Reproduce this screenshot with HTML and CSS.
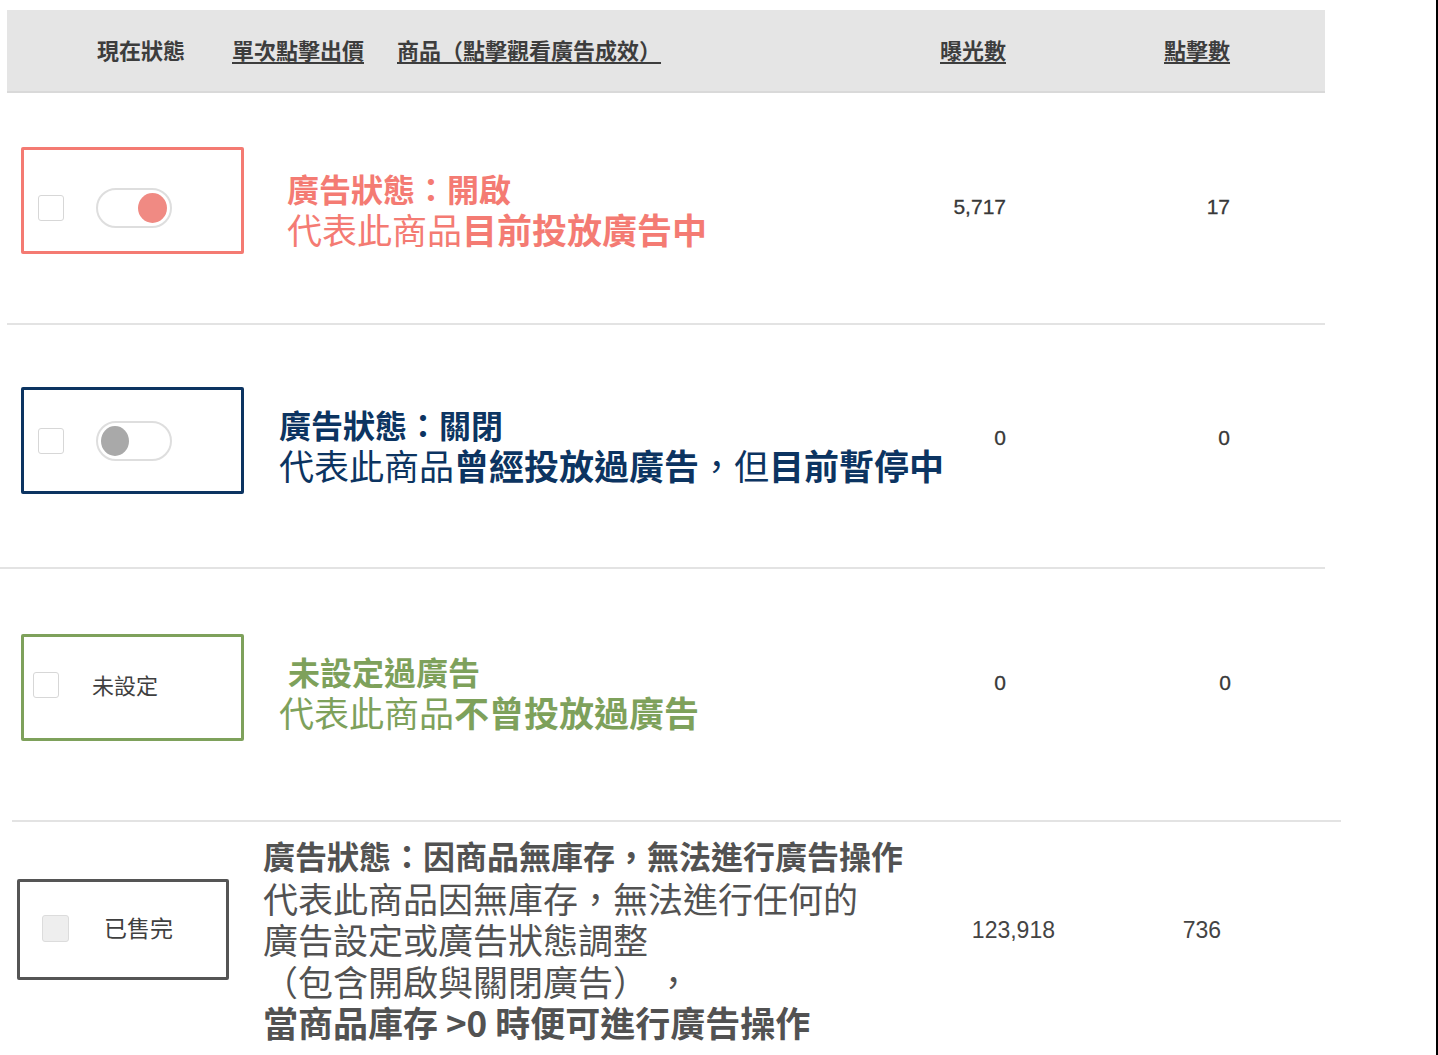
FILE: index.html
```html
<!DOCTYPE html>
<html lang="zh-Hant">
<head>
<meta charset="utf-8">
<title>廣告狀態說明</title>
<link rel="stylesheet" href="styles.css">
</head>
<body>
<div class="page">
  <div class="thead">
    <span class="th th-status">現在狀態</span>
    <span class="th th-bid u">單次點擊出價</span>
    <span class="th th-product u">商品（點擊觀看廣告成效）</span>
    <span class="th th-imp u">曝光數</span>
    <span class="th th-click u">點擊數</span>
  </div>

  <div class="row row1">
    <div class="box box-red">
      <span class="cb"></span>
      <span class="toggle on"><span class="knob"></span></span>
    </div>
    <div class="desc red">
      <div class="l-title">廣告狀態：開啟</div>
      <div class="l-body">代表此商品<b>目前投放廣告中</b></div>
    </div>
    <div class="num">5,717</div>
    <div class="num">17</div>
  </div>

  <div class="row row2">
    <div class="box box-navy">
      <span class="cb"></span>
      <span class="toggle off"><span class="knob"></span></span>
    </div>
    <div class="desc navy">
      <div class="l-title">廣告狀態：關閉</div>
      <div class="l-body">代表此商品<b>曾經投放過廣告</b>，但<b>目前暫停中</b></div>
    </div>
    <div class="num">0</div>
    <div class="num">0</div>
  </div>

  <div class="row row3">
    <div class="box box-green">
      <span class="cb"></span>
      <span class="box-label">未設定</span>
    </div>
    <div class="desc green">
      <div class="l-title indent">未設定過廣告</div>
      <div class="l-body">代表此商品<b>不曾投放過廣告</b></div>
    </div>
    <div class="num">0</div>
    <div class="num">0</div>
  </div>

  <div class="row row4">
    <div class="box box-gray">
      <span class="cb cb-disabled"></span>
      <span class="box-label sold">已售完</span>
    </div>
    <div class="desc gray">
      <div class="g-title">廣告狀態：因商品無庫存，無法進行廣告操作</div>
      <div class="g-body">代表此商品因無庫存，無法進行任何的</div>
      <div class="g-body">廣告設定或廣告狀態調整</div>
      <div class="g-body">（包含開啟與關閉廣告）&nbsp;，</div>
      <div class="g-last">當商品庫存 &gt;0 時便可進行廣告操作</div>
    </div>
    <div class="num big">123,918</div>
    <div class="num big">736</div>
  </div>
</div>
</body>
</html>
```

FILE: styles.css
```css
* { box-sizing: border-box; }
html, body { margin: 0; padding: 0; background: #fff; }
body { font-family: "Noto Sans CJK TC", "Noto Sans", sans-serif; }

.page {
  width: 1438px;
  height: 1055px;
  overflow: hidden;
  border-right: 2px solid #000;
}

/* header */
.thead {
  margin-top: 10px;
  margin-left: 7px;
  width: 1318px;
  height: 83px;
  background: #e5e5e5;
  border-bottom: 2px solid #d9d9d9;
  display: flex;
  align-items: center;
  padding-left: 90px;
  padding-bottom: 4px;
}
.th {
  font-size: 22px;
  font-weight: 700;
  color: #3d3d3d;
  white-space: nowrap;
  flex: none;
}
.u {
  text-decoration: underline;
  text-underline-offset: 3px;
  text-decoration-thickness: 1.5px;
  text-decoration-skip-ink: none;
}
.th-status { width: 135px; }
.th-bid { width: 165px; }
.th-product { width: 543px; }
.th-imp { width: 224px; }

/* rows */
.row {
  display: grid;
  align-items: start;
  border-bottom: 2px solid #e3e3e3;
}
.row1 {
  margin-left: 7px;
  width: 1318px;
  height: 232px;
  padding-left: 14px;
  grid-template-columns: 223px 636px 126px 224px;
}
.row2 {
  width: 1325px;
  height: 244px;
  padding-left: 21px;
  grid-template-columns: 223px 731px 31px 224px;
}
.row3 {
  margin-left: 12px;
  width: 1329px;
  height: 253px;
  padding-left: 9px;
  grid-template-columns: 223px 731px 31px 225px;
}
.row4 {
  width: 1436px;
  height: 233px;
  border-bottom: none;
  padding-left: 17px;
  grid-template-columns: 212px 701px 125px 166px;
}

/* status boxes */
.box {
  height: 107px;
  border: 3px solid;
  border-radius: 2px;
  display: flex;
  align-items: center;
}
.box-red { border-color: #f47a72; padding-left: 14px; padding-top: 15px; gap: 32px; margin-top: 54px; }
.box-navy { border-color: #0c3461; border-width: 3.5px; padding-left: 13.5px; gap: 32px; margin-top: 62px; }
.box-green { border-color: #7ea15b; padding-left: 9px; gap: 33px; margin-top: 65px; }
.box-gray { border-color: #555; height: 101px; padding-left: 22px; gap: 35px; margin-top: 57px; }

.cb {
  width: 26px;
  height: 26px;
  border: 1.5px solid #d7d7d7;
  border-radius: 3px;
  background: #fff;
  flex: none;
}
.box-green .cb { margin-top: -6px; }
.cb-disabled { width: 27px; height: 27px; background: #eeeeee; border-color: #dcdcdc; margin-top: -3px; }

.toggle {
  width: 76px;
  height: 40px;
  border: 2px solid #dedede;
  border-radius: 20px;
  background: #fff;
  display: flex;
  align-items: center;
  padding: 0 3px;
  flex: none;
}
.toggle.on { justify-content: flex-end; }
.toggle.off { justify-content: flex-start; }
.knob {
  width: 29px;
  height: 30px;
  border-radius: 50%;
}
.toggle.on .knob { background: #f08a83; }
.toggle.off .knob { background: #a9a9a9; width: 28px; }

.box-label {
  font-size: 22px;
  color: #3f3f3f;
  line-height: 1;
  margin-top: -8px;
}
.box-label.sold { font-size: 23px; margin-top: -4px; }

/* descriptions */
.desc { white-space: nowrap; }
.l-title { font-size: 32px; font-weight: 700; line-height: 40px; }
.l-body { font-size: 35px; font-weight: 400; line-height: 42px; }
.l-body b { font-weight: 700; }
.indent { padding-left: 9px; }

.red { color: #f47b73; padding-left: 43px; margin-top: 75px; }
.navy { color: #0c3461; padding-left: 35px; margin-top: 79px; }
.green { color: #7ea15b; padding-left: 35px; margin-top: 82px; }
.gray { color: #525252; padding-left: 34px; margin-top: 13px; }

.g-title { font-size: 32px; font-weight: 700; line-height: 41.5px; }
.g-body { font-size: 35px; font-weight: 400; line-height: 41.5px; }
.g-last { font-size: 35px; font-weight: 700; line-height: 41.5px; }

/* numbers */
.num {
  font-family: "Liberation Sans", Arial, sans-serif;
  font-size: 21px;
  line-height: 24px;
  color: #383838;
  text-align: right;
  -webkit-text-stroke: 0.3px #383838;
}
.row1 .num { margin-top: 102px; }
.row2 .num { margin-top: 101px; }
.row3 .num { margin-top: 102px; }
.num.big { font-size: 23px; line-height: 26px; margin-top: 95px; -webkit-text-stroke: 0; color: #444; }
```
